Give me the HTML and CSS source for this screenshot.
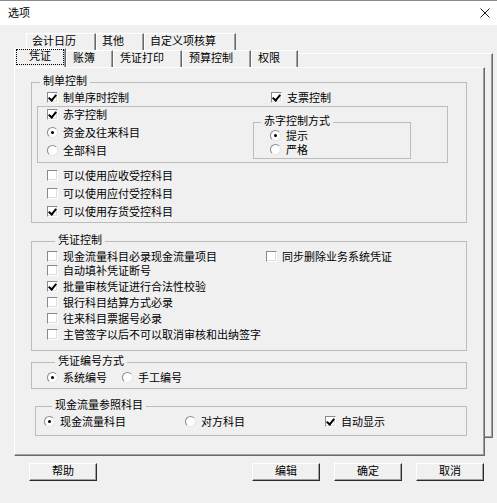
FILE: index.html
```html
<!DOCTYPE html>
<html lang="zh-CN">
<head>
<meta charset="utf-8">
<title>选项</title>
<link rel="stylesheet" href="styles.css">
</head>
<body>
<div class="window">
  <div class="titlebar">
    <span class="title">选项</span>
    <svg class="close" width="10" height="10" viewBox="0 0 10 10"><path d="M0.5 0.5 L9.5 9.5 M9.5 0.5 L0.5 9.5" stroke="#1a1a1a" stroke-width="1" fill="none"/></svg>
  </div>
  <div class="client">
    <div class="tabctl">
      <div class="tabrow row1">
        <div class="tab">会计日历</div>
        <div class="tab">其他</div>
        <div class="tab">自定义项核算</div>
      </div>
      <div class="backpage">
        <div class="tabrow row2">
          <div class="tab sel"><span class="focus">凭证</span></div>
          <div class="tab">账簿</div>
          <div class="tab">凭证打印</div>
          <div class="tab">预算控制</div>
          <div class="tab">权限</div>
        </div>
        <div class="page">
          <fieldset class="grp g1">
            <legend>制单控制</legend>
            <div class="row r15 cols c224">
              <label class="opt"><span class="ck on"></span>制单序时控制</label>
              <label class="opt"><span class="ck on"></span>支票控制</label>
            </div>
            <div class="inner">
              <div class="leftcol">
                <div class="row r18"><label class="opt"><span class="ck on"></span>赤字控制</label></div>
                <div class="row r18"><label class="opt"><span class="rd on"></span>资金及往来科目</label></div>
                <div class="row r18"><label class="opt"><span class="rd"></span>全部科目</label></div>
              </div>
              <fieldset class="grp sub">
                <legend>赤字控制方式</legend>
                <div class="row r14"><label class="opt"><span class="rd on"></span>提示</label></div>
                <div class="row r14"><label class="opt"><span class="rd"></span>严格</label></div>
              </fieldset>
            </div>
            <div class="after">
              <div class="row r18"><label class="opt"><span class="ck"></span>可以使用应收受控科目</label></div>
              <div class="row r18"><label class="opt"><span class="ck"></span>可以使用应付受控科目</label></div>
              <div class="row r18"><label class="opt"><span class="ck on"></span>可以使用存货受控科目</label></div>
            </div>
          </fieldset>

          <fieldset class="grp g2">
            <legend>凭证控制</legend>
            <div class="row r16 cols c219">
              <label class="opt"><span class="ck"></span>现金流量科目必录现金流量项目</label>
              <label class="opt"><span class="ck"></span>同步删除业务系统凭证</label>
            </div>
            <div class="row r16"><label class="opt"><span class="ck"></span>自动填补凭证断号</label></div>
            <div class="row r16"><label class="opt"><span class="ck on"></span>批量审核凭证进行合法性校验</label></div>
            <div class="row r16"><label class="opt"><span class="ck"></span>银行科目结算方式必录</label></div>
            <div class="row r16"><label class="opt"><span class="ck"></span>往来科目票据号必录</label></div>
            <div class="row r16"><label class="opt"><span class="ck"></span>主管签字以后不可以取消审核和出纳签字</label></div>
          </fieldset>

          <fieldset class="grp g3">
            <legend>凭证编号方式</legend>
            <div class="row r19 cols c75">
              <label class="opt"><span class="rd on"></span>系统编号</label>
              <label class="opt"><span class="rd"></span>手工编号</label>
            </div>
          </fieldset>

          <fieldset class="grp g4">
            <legend>现金流量参照科目</legend>
            <div class="row r18 cols c141">
              <label class="opt"><span class="rd on"></span>现金流量科目</label>
              <label class="opt"><span class="rd"></span>对方科目</label>
              <label class="opt"><span class="ck on"></span>自动显示</label>
            </div>
          </fieldset>
        </div>
      </div>
    </div>
    <div class="buttons">
      <button class="btn help" type="button">帮助</button>
      <button class="btn edit" type="button">编辑</button>
      <button class="btn" type="button">确定</button>
      <button class="btn" type="button">取消</button>
    </div>
  </div>
</div>
</body>
</html>
```
FILE: styles.css
```css
* { box-sizing: border-box; }
html, body { margin: 0; padding: 0; }
body {
  font-family: "Noto Sans CJK SC", "Noto Sans", sans-serif;
  font-size: 11px;
  color: #000;
  background: #f0f0f0;
}
.window {
  width: 497px;
  height: 503px;
  background: #f0f0f0;
  border-top: 1px solid #8c8c8c;
  overflow: hidden;
}
.titlebar {
  height: 24px;
  background: #ffffff;
  display: flex;
  align-items: center;
  justify-content: space-between;
  padding: 0 7px 0 8px;
}
.title { font-size: 11px; line-height: 14px; padding-bottom: 2px; }
.close { display: block; }

.client { padding: 8px 0 0 14px; }
.tabctl { width: 479px; }

.tabrow { display: flex; height: 17px; }
.row1 { margin-left: 12px; }
.tab {
  height: 17px;
  line-height: 12px;
  white-space: nowrap;
  border-top: 1px solid #ffffff;
  border-left: 1px solid #ffffff;
  border-right: 1px solid #696969;
  box-shadow: inset -1px 0 #a0a0a0;
  background: #f0f0f0;
}
.row1 .tab { padding: 0 19px 0 5px; }
.row2 .tab { padding: 0 17px 0 6px; }
.row2 { margin-top: -4px; position: relative; z-index: 1; }
.row2 .tab.sel {
  margin-top: -2px;
  height: 19px;
  padding: 0 1px 0 1px;
}
.focus {
  display: block;
  width: 48px;
  height: 16px;
  line-height: 11px;
  text-align: center;
  border: 1px dotted #000;
}

.backpage {
  margin-top: 3px;
  border-top: 1px solid #ffffff;
  border-right: 1px solid #696969;
  border-bottom: 1px solid #696969;
  box-shadow: inset -1px -1px #a0a0a0;
}
.page {
  margin-right: 7px;
  margin-bottom: -19px;
  position: relative;
  background: #f0f0f0;
  border-top: 1px solid #ffffff;
  border-left: 1px solid #ffffff;
  border-right: 1px solid #696969;
  border-bottom: 1px solid #696969;
  box-shadow: inset -1px -1px #a0a0a0;
  padding: 7px 17px 19px 16px;
}

.grp {
  margin: 0;
  padding: 0;
  min-width: 0;
  border: 1px solid #bcbcbc;
}
.grp legend {
  margin-left: 8px;
  padding: 0 3px;
  height: 14px;
  line-height: 10px;
  white-space: nowrap;
}
.row { display: flex; align-items: center; padding-bottom: 4px; }
.r14 { height: 14px; padding-bottom: 2px; }
.r15 { height: 15px; }
.r16 { height: 16px; }
.r17 { height: 17px; }
.r18 { height: 18px; }
.r19 { height: 19px; }
.cols { display: grid; align-items: center; }
.c224 { grid-template-columns: 224px auto; }
.c219 { grid-template-columns: 219px auto; }
.c75 { grid-template-columns: 75px auto; }
.c141 { grid-template-columns: 141px 140px auto; }

.g1 .r15, .g1 .after { padding-left: 15px; }
.g1 .after { margin-top: 5px; }
.inner {
  display: flex;
  align-items: flex-start;
  margin: 2px 0 0 5px;
  width: 411px;
  border: 1px solid #bcbcbc;
  padding: 0 0 1px 9px;
}
.leftcol { width: 206px; }
.grp.sub {
  width: 158px;
  margin-top: 8px;
  padding: 0 0 1px 16px;
}
.grp.sub legend { margin-left: -9px; }

.g2 { margin-top: 11px; padding: 0 0 6px 15px; }
.g3 { margin-top: 4px; padding: 0 0 0 15px; }
.g4 { margin: 10px 0 0 4px; padding: 0 0 4px 8px; }

.opt { display: flex; align-items: center; white-space: nowrap; }
.ck, .rd {
  flex: none;
  width: 11px;
  height: 11px;
  margin-right: 5px;
  background: #ffffff;
  position: relative;
}
.ck {
  border-top: 1px solid #8a8a8a;
  border-left: 1px solid #8a8a8a;
  border-right: 1px solid #ffffff;
  border-bottom: 1px solid #ffffff;
  box-shadow: inset -1px -1px #dcdcdc;
}
.ck.on::after {
  content: "";
  position: absolute;
  left: 2px;
  top: 0px;
  width: 3px;
  height: 6px;
  border: solid #000;
  border-width: 0 2px 2px 0;
  transform: rotate(40deg);
}
.rd {
  border-radius: 50%;
  border: 1px solid;
  border-color: #8a8a8a #e6e6e6 #e6e6e6 #8a8a8a;
}
.rd.on::after {
  content: "";
  position: absolute;
  left: 3px;
  top: 3px;
  width: 3px;
  height: 3px;
  border-radius: 50%;
  background: #000;
}

.buttons { display: flex; margin-top: 25px; }
.btn {
  width: 68px;
  height: 18px;
  padding: 0 0 3px 0;
  margin: 0 0 0 14px;
  font: inherit;
  color: #000;
  line-height: 11px;
  background: #f0f0f0;
  border-top: 1px solid #ffffff;
  border-left: 1px solid #ffffff;
  border-right: 1px solid #2b2b2b;
  border-bottom: 1px solid #2b2b2b;
  box-shadow: inset -1px -1px #a0a0a0;
}
.btn.help { margin-left: 15px; }
.btn.edit { margin-left: 155px; }
```
